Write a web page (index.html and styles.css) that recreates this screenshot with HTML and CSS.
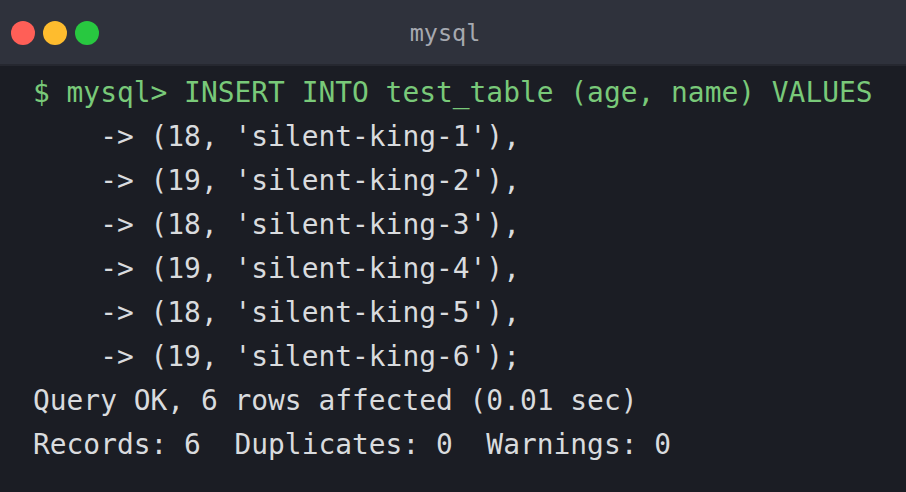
FILE: index.html
```html
<!DOCTYPE html>
<html>
<head>
<meta charset="utf-8">
<link rel="stylesheet" href="styles.css">
</head>
<body>
<div class="window">
  <div class="titlebar">
    <div class="lights">
      <span class="light red"></span>
      <span class="light yellow"></span>
      <span class="light green"></span>
    </div>
    <div class="title">mysql</div>
  </div>
  <pre class="term"><span class="cmd">$ mysql&gt; INSERT INTO test_table (age, name) VALUES</span>
    -&gt; (18, 'silent-king-1'),
    -&gt; (19, 'silent-king-2'),
    -&gt; (18, 'silent-king-3'),
    -&gt; (19, 'silent-king-4'),
    -&gt; (18, 'silent-king-5'),
    -&gt; (19, 'silent-king-6');
Query OK, 6 rows affected (0.01 sec)
Records: 6  Duplicates: 0  Warnings: 0</pre>
</div>
</body>
</html>
```
FILE: styles.css
```css
html, body {
  margin: 0;
  padding: 0;
  background: #1b1d24;
  width: 906px;
  height: 492px;
  overflow: hidden;
}
.window {
  width: 906px;
  height: 492px;
  background: #1b1d24;
}
.titlebar {
  position: relative;
  height: 64px;
  background: #2f323c;
  border-bottom: 2px solid #262830;
  display: flex;
  align-items: center;
  justify-content: center;
}
.lights {
  position: absolute;
  left: 11px;
  top: 21px;
  display: flex;
  gap: 8px;
}
.light {
  width: 24px;
  height: 24px;
  border-radius: 50%;
  display: block;
}
.red { background: #ff5f57; }
.yellow { background: #febc2e; }
.green { background: #28c840; }
.title {
  font-family: "DejaVu Sans Mono", monospace;
  font-size: 23.5px;
  color: #a6a9b0;
  margin-right: 16px;
  margin-top: 2px;
}
.term {
  margin: 0;
  padding: 5px 0 0 33px;
  font-family: "DejaVu Sans Mono", monospace;
  font-size: 27.9px;
  line-height: 44px;
  color: #d9dbde;
  white-space: pre;
}
.cmd {
  color: #79c979;
}
```
